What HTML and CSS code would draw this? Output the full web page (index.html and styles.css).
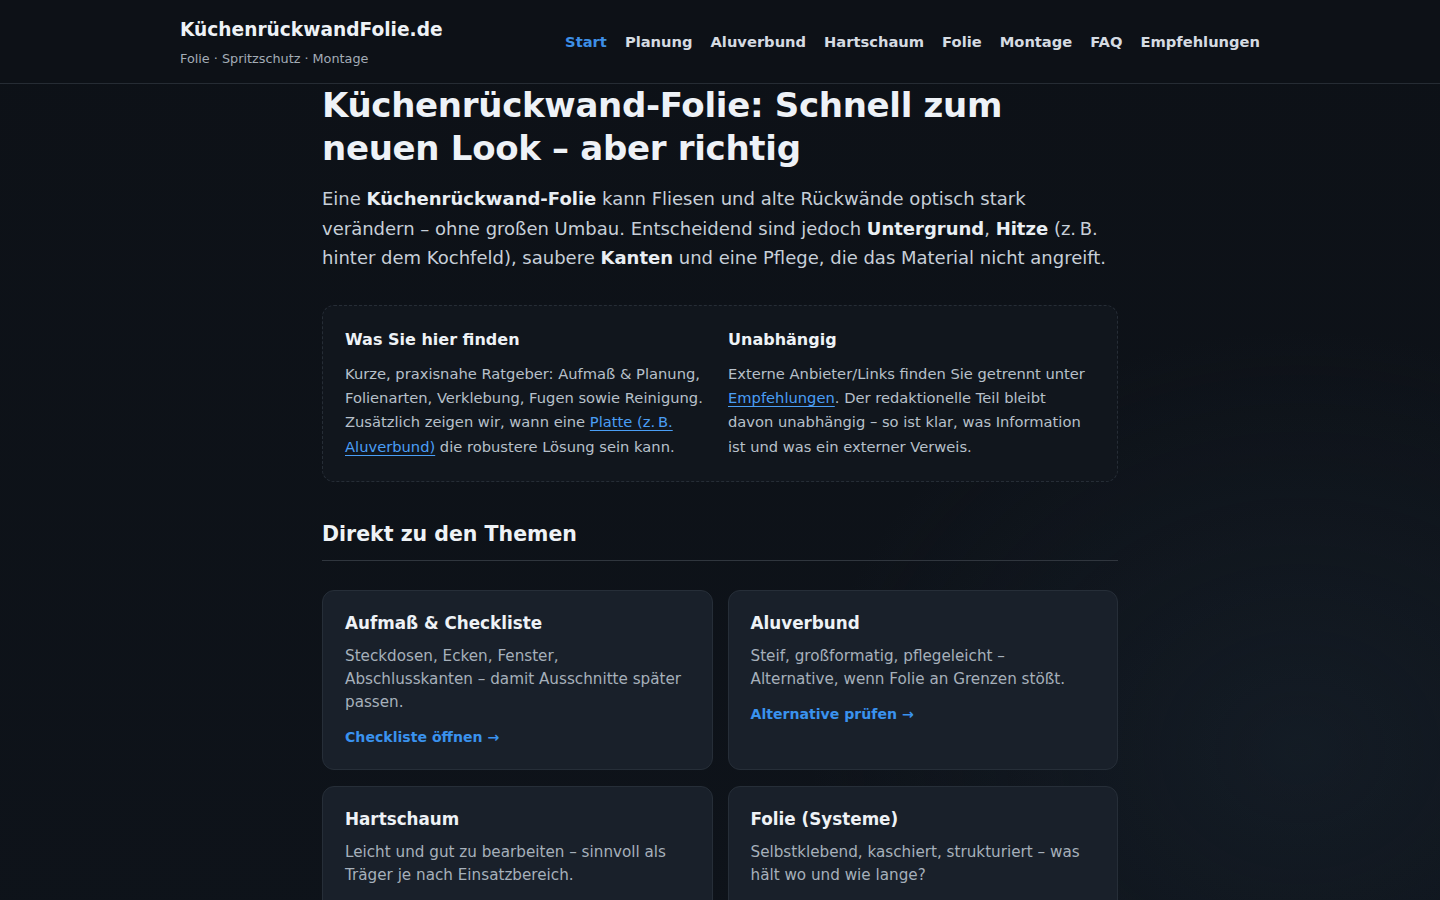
FILE: index.html
```html
<!DOCTYPE html>
<html lang="de">
<head>
<meta charset="utf-8">
<title>KüchenrückwandFolie.de</title>
<link rel="stylesheet" href="styles.css">
</head>
<body>
<header class="site-header">
  <div class="header-inner">
    <div class="brand">
      <a class="brand-name" href="#">KüchenrückwandFolie.de</a>
      <div class="brand-tag">Folie · Spritzschutz · Montage</div>
    </div>
    <nav class="nav">
      <a class="active" href="#">Start</a>
      <a href="#">Planung</a>
      <a href="#">Aluverbund</a>
      <a href="#">Hartschaum</a>
      <a href="#">Folie</a>
      <a href="#">Montage</a>
      <a href="#">FAQ</a>
      <a href="#">Empfehlungen</a>
    </nav>
  </div>
</header>
<main class="main">
  <h1 class="title">Küchenrückwand-Folie: Schnell zum neuen Look – aber richtig</h1>
  <p class="lead">Eine <strong>Küchenrückwand-Folie</strong> kann Fliesen und alte Rückwände optisch stark verändern – ohne großen Umbau. Entscheidend sind jedoch <strong>Untergrund</strong>, <strong>Hitze</strong> (z.&#8239;B. hinter dem Kochfeld), saubere <strong>Kanten</strong> und eine Pflege, die das Material nicht angreift.</p>

  <section class="info">
    <div class="info-col">
      <h3>Was Sie hier finden</h3>
      <p>Kurze, praxisnahe Ratgeber: Aufmaß &amp; Planung, Folienarten, Verklebung, Fugen sowie Reinigung. Zusätzlich zeigen wir, wann eine <a href="#">Platte (z.&#8239;B. Aluverbund)</a> die robustere Lösung sein kann.</p>
    </div>
    <div class="info-col">
      <h3>Unabhängig</h3>
      <p>Externe Anbieter/Links finden Sie getrennt unter <a href="#">Empfehlungen</a>. Der redaktionelle Teil bleibt davon unabhängig – so ist klar, was Information ist und was ein externer Verweis.</p>
    </div>
  </section>

  <h2 class="section-title">Direkt zu den Themen</h2>

  <div class="cards">
    <article class="card">
      <h3>Aufmaß &amp; Checkliste</h3>
      <p>Steckdosen, Ecken, Fenster, Abschlusskanten – damit Ausschnitte später passen.</p>
      <a class="more" href="#">Checkliste öffnen →</a>
    </article>
    <article class="card">
      <h3>Aluverbund</h3>
      <p>Steif, großformatig, pflegeleicht – Alternative, wenn Folie an Grenzen stößt.</p>
      <a class="more" href="#">Alternative prüfen →</a>
    </article>
    <article class="card">
      <h3>Hartschaum</h3>
      <p>Leicht und gut zu bearbeiten – sinnvoll als Träger je nach Einsatzbereich.</p>
      <a class="more" href="#">Hartschaum ansehen →</a>
    </article>
    <article class="card">
      <h3>Folie (Systeme)</h3>
      <p>Selbstklebend, kaschiert, strukturiert – was hält wo und wie lange?</p>
      <a class="more" href="#">Folien vergleichen →</a>
    </article>
  </div>
</main>
</body>
</html>
```
FILE: styles.css
```css
* { box-sizing: border-box; }
html { background: #0e131a; }
body {
  margin: 0;
  min-height: 100vh;
  font-family: "DejaVu Sans", Verdana, sans-serif;
  color: #e6edf3;
  background:
    radial-gradient(ellipse 700px 600px at 1300px 750px, rgba(30, 44, 58, 0.35), transparent 70%),
    linear-gradient(180deg, #0d1117 0%, #0e131a 100%);
}
a { color: inherit; text-decoration: none; }

.site-header {
  background: #0d1117;
  border-bottom: 1px solid #262c34;
}
.header-inner {
  max-width: 1080px;
  margin: 0 auto;
  height: 83px;
  display: flex;
  align-items: center;
  justify-content: space-between;
}
.brand { display: flex; flex-direction: column; gap: 9px; padding-top: 1px; }
.brand-name { font-size: 18.6px; font-weight: 700; color: #eef2f6; line-height: 23px; }
.brand-tag { font-size: 12.8px; color: #a3acb6; line-height: 16px; padding-top: 1px; }
.nav { display: flex; gap: 18px; }
.nav a { font-size: 14.7px; font-weight: 700; color: #d5dbe2; }
.nav a.active { color: #3d8fe6; }

.main {
  max-width: 796px;
  margin: 0 auto;
  padding-bottom: 40px;
}
.title {
  margin: 0;
  font-size: 34px;
  letter-spacing: -0.3px;
  line-height: 43px;
  font-weight: 700;
  color: #eef2f7;
}
.lead {
  margin: 14px 0 0;
  font-size: 18px;
  line-height: 29.5px;
  color: #c7cfd8;
}
.lead strong { color: #e9eef3; }

.info {
  margin-top: 32px;
  border: 1px dashed #262d36;
  border-radius: 12px;
  background: #11161d;
  padding: 22px 22px 22px;
  display: grid;
  grid-template-columns: 1fr 1fr;
  column-gap: 16px;
}
.info h3 {
  margin: 0;
  font-size: 16px;
  line-height: 24px;
  font-weight: 700;
  color: #eef2f6;
}
.info p {
  margin: 10px 0 0;
  font-size: 14.7px;
  line-height: 24.4px;
  color: #b7c0ca;
}
.info p a {
  color: #4a9ef5;
  text-decoration: underline;
  text-underline-offset: 3px;
}

.section-title {
  margin: 38px 0 0;
  font-size: 20.5px;
  line-height: 28px;
  font-weight: 700;
  color: #eef2f6;
  padding-bottom: 12px;
  border-bottom: 1px solid #30363e;
}

.cards {
  margin-top: 29px;
  display: grid;
  grid-template-columns: 1fr 1fr;
  gap: 16px 15px;
}
.card {
  background: #19202a;
  border: 1px solid #262e38;
  border-radius: 12px;
  padding: 20px 22px 23px;
}
.card h3 {
  margin: 0;
  font-size: 16.8px;
  line-height: 24px;
  font-weight: 700;
  color: #eef2f6;
}
.card p {
  margin: 10px 0 0;
  font-size: 15.2px;
  line-height: 23px;
  color: #a6b0bb;
}
.card .more {
  display: inline-block;
  margin-top: 15px;
  font-size: 14.1px;
  font-weight: 700;
  color: #3a92ee;
}
```
